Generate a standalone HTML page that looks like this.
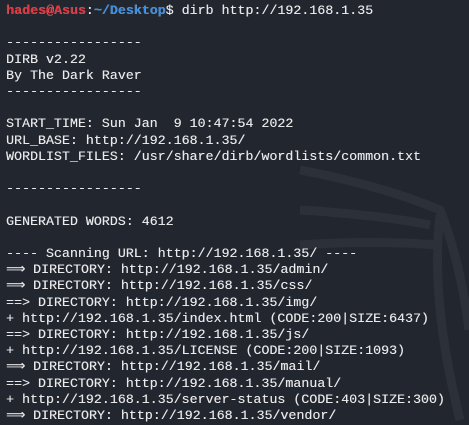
<html><head><style>
body{margin:0;width:469px;height:425px;background:#22262e;overflow:hidden;position:relative}
pre{position:absolute;left:6px;top:3px;margin:0;font-family:"Liberation Mono","DejaVu Sans Mono",monospace;font-size:13.3px;line-height:16.2px;color:#ececee;text-shadow:0.3px 0 0 rgba(236,236,238,0.6)}
.r{color:#e8313a;font-weight:bold}.b{color:#3a8fe6;font-weight:bold}
svg{position:absolute;left:0;top:0}
</style></head><body>
<svg width="469" height="425"><g fill="none" stroke="#2c3038" stroke-width="9">
<path d="M300 170 Q380 185 440 210 Q460 260 469 330"/>
<path d="M300 210 Q380 215 430 225"/>
<path d="M300 245 Q370 240 440 245"/>
<path d="M440 215 Q430 300 460 420"/>
</g></svg>
<pre><span class="r">hades@Asus</span>:<span class="b">~/Desktop</span>$ dirb http://192.168.1.35

-----------------
DIRB v2.22
By The Dark Raver
-----------------

START_TIME: Sun Jan  9 10:47:54 2022
URL_BASE: http://192.168.1.35/
WORDLIST_FILES: /usr/share/dirb/wordlists/common.txt

-----------------

GENERATED WORDS: 4612

---- Scanning URL: http://192.168.1.35/ ----
⟹ DIRECTORY: http://192.168.1.35/admin/
⟹ DIRECTORY: http://192.168.1.35/css/
==> DIRECTORY: http://192.168.1.35/img/
+ http://192.168.1.35/index.html (CODE:200|SIZE:6437)
==> DIRECTORY: http://192.168.1.35/js/
+ http://192.168.1.35/LICENSE (CODE:200|SIZE:1093)
⟹ DIRECTORY: http://192.168.1.35/mail/
==> DIRECTORY: http://192.168.1.35/manual/
+ http://192.168.1.35/server-status (CODE:403|SIZE:300)
⟹ DIRECTORY: http://192.168.1.35/vendor/</pre>
</body></html>
